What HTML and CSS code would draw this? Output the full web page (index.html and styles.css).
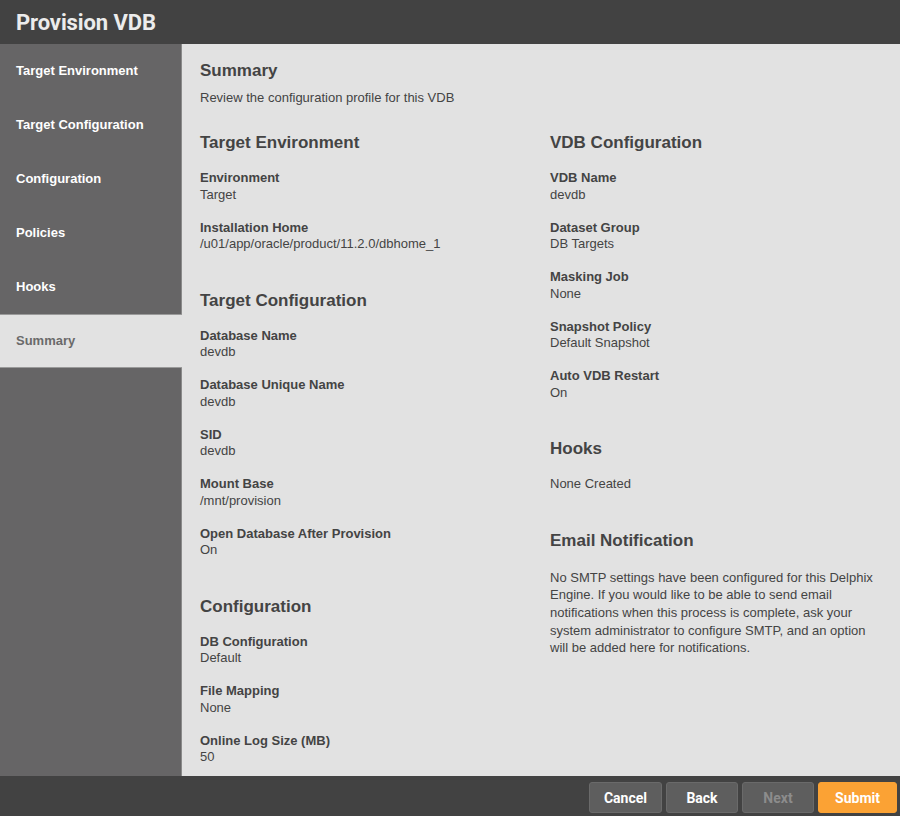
FILE: index.html
```html
<!DOCTYPE html>
<html>
<head>
<meta charset="utf-8">
<link rel="stylesheet" href="styles.css">
</head>
<body>
<div class="app">
  <header class="topbar"><h1 class="title">Provision VDB</h1></header>
  <div class="main">
    <nav class="sidebar">
      <div class="nav-item">Target Environment</div>
      <div class="nav-item">Target Configuration</div>
      <div class="nav-item">Configuration</div>
      <div class="nav-item">Policies</div>
      <div class="nav-item">Hooks</div>
      <div class="nav-item active">Summary</div>
    </nav>
    <section class="content">
      <h2 class="heading">Summary</h2>
      <p class="intro">Review the configuration profile for this VDB</p>
      <div class="columns">
        <div class="col">
          <div class="section">
            <h3 class="heading">Target Environment</h3>
            <div class="field"><div class="label">Environment</div><div class="value">Target</div></div>
            <div class="field"><div class="label">Installation Home</div><div class="value">/u01/app/oracle/product/11.2.0/dbhome_1</div></div>
          </div>
          <div class="section">
            <h3 class="heading">Target Configuration</h3>
            <div class="field"><div class="label">Database Name</div><div class="value">devdb</div></div>
            <div class="field"><div class="label">Database Unique Name</div><div class="value">devdb</div></div>
            <div class="field"><div class="label">SID</div><div class="value">devdb</div></div>
            <div class="field"><div class="label">Mount Base</div><div class="value">/mnt/provision</div></div>
            <div class="field"><div class="label">Open Database After Provision</div><div class="value">On</div></div>
          </div>
          <div class="section">
            <h3 class="heading">Configuration</h3>
            <div class="field"><div class="label">DB Configuration</div><div class="value">Default</div></div>
            <div class="field"><div class="label">File Mapping</div><div class="value">None</div></div>
            <div class="field"><div class="label">Online Log Size (MB)</div><div class="value">50</div></div>
          </div>
        </div>
        <div class="col">
          <div class="section">
            <h3 class="heading">VDB Configuration</h3>
            <div class="field"><div class="label">VDB Name</div><div class="value">devdb</div></div>
            <div class="field"><div class="label">Dataset Group</div><div class="value">DB Targets</div></div>
            <div class="field"><div class="label">Masking Job</div><div class="value">None</div></div>
            <div class="field"><div class="label">Snapshot Policy</div><div class="value">Default Snapshot</div></div>
            <div class="field"><div class="label">Auto VDB Restart</div><div class="value">On</div></div>
          </div>
          <div class="section">
            <h3 class="heading">Hooks</h3>
            <div class="field"><div class="value">None Created</div></div>
          </div>
          <div class="section">
            <h3 class="heading">Email Notification</h3>
            <p class="note">No SMTP settings have been configured for this Delphix Engine. If you would like to be able to send email notifications when this process is complete, ask your system administrator to configure SMTP, and an option will be added here for notifications.</p>
          </div>
        </div>
      </div>
    </section>
  </div>
  <footer class="footer">
    <button class="btn">Cancel</button>
    <button class="btn">Back</button>
    <button class="btn disabled">Next</button>
    <button class="btn primary">Submit</button>
  </footer>
</div>
</body>
</html>
```

FILE: styles.css
```css
* { box-sizing: border-box; }
html, body { margin: 0; padding: 0; }
body {
  width: 900px;
  height: 816px;
  overflow: hidden;
  font-family: "Liberation Sans", Arial, sans-serif;
  background: #424242;
}
.app {
  display: flex;
  flex-direction: column;
  height: 816px;
}
.topbar {
  height: 44px;
  background: #424242;
  display: flex;
  align-items: center;
  padding-left: 16px;
  flex: none;
}
.title {
  margin: 0;
  font-family: Roboto, sans-serif;
  font-weight: 700;
  font-size: 22px;
  color: #ececec;
  letter-spacing: -0.1px;
}
.main {
  flex: 1;
  display: flex;
  min-height: 0;
}
.sidebar {
  width: 182px;
  flex: none;
  background: #666566;
  border-right: 1px solid #8a8a8a;
  display: flex;
  flex-direction: column;
}
.nav-item {
  height: 54px;
  display: flex;
  align-items: center;
  padding-left: 16px;
  padding-bottom: 2px;
  font-family: "Liberation Sans", Arial, sans-serif;
  font-size: 13px;
  font-weight: 700;
  color: #ffffff;
}
.nav-item.active {
  background: #e2e2e2;
  color: #6a6a6a;
  border-top: 1px solid #9a9a9a;
  border-bottom: 1px solid #9a9a9a;
  margin-right: -1px;
}
.content {
  flex: 1;
  background: #e2e2e2;
  padding: 17px 18px 0 18px;
  color: #444;
  overflow: hidden;
}
.heading {
  margin: 0;
  font-size: 17px;
  line-height: 20px;
  font-weight: 700;
  color: #444;
}
.intro {
  margin: 8px 0 0 0;
  font-size: 13px;
  line-height: 17px;
}
.columns {
  display: grid;
  grid-template-columns: 350px 1fr;
  margin-top: 27px;
}
.section {
  margin-bottom: 38px;
}
.section .heading {
  margin-bottom: 17px;
}
.field {
  margin-bottom: 16.5px;
  font-size: 13px;
  line-height: 16.5px;
}
.label {
  font-weight: 700;
  color: #444;
}
.value {
  color: #444;
}
.note {
  margin: 0;
  font-size: 13px;
  line-height: 17.7px;
  color: #444;
  padding-top: 1px;
}
.footer {
  height: 40px;
  flex: none;
  background: #424242;
  display: flex;
  justify-content: flex-end;
  align-items: flex-start;
  gap: 4px;
  padding: 6px 3px 0 0;
}
.btn {
  height: 31px;
  min-width: 72px;
  padding: 0 14px;
  border: 1px solid #6a6a6a;
  border-radius: 3px;
  background: #5e5e5e;
  color: #ffffff;
  font-family: Roboto, sans-serif;
  font-weight: 700;
  font-size: 14px;
}
.btn.disabled {
  color: #8c8c8c;
}
.btn.primary {
  background: #fba234;
  border-color: #fba234;
  min-width: 79px;
}
```
